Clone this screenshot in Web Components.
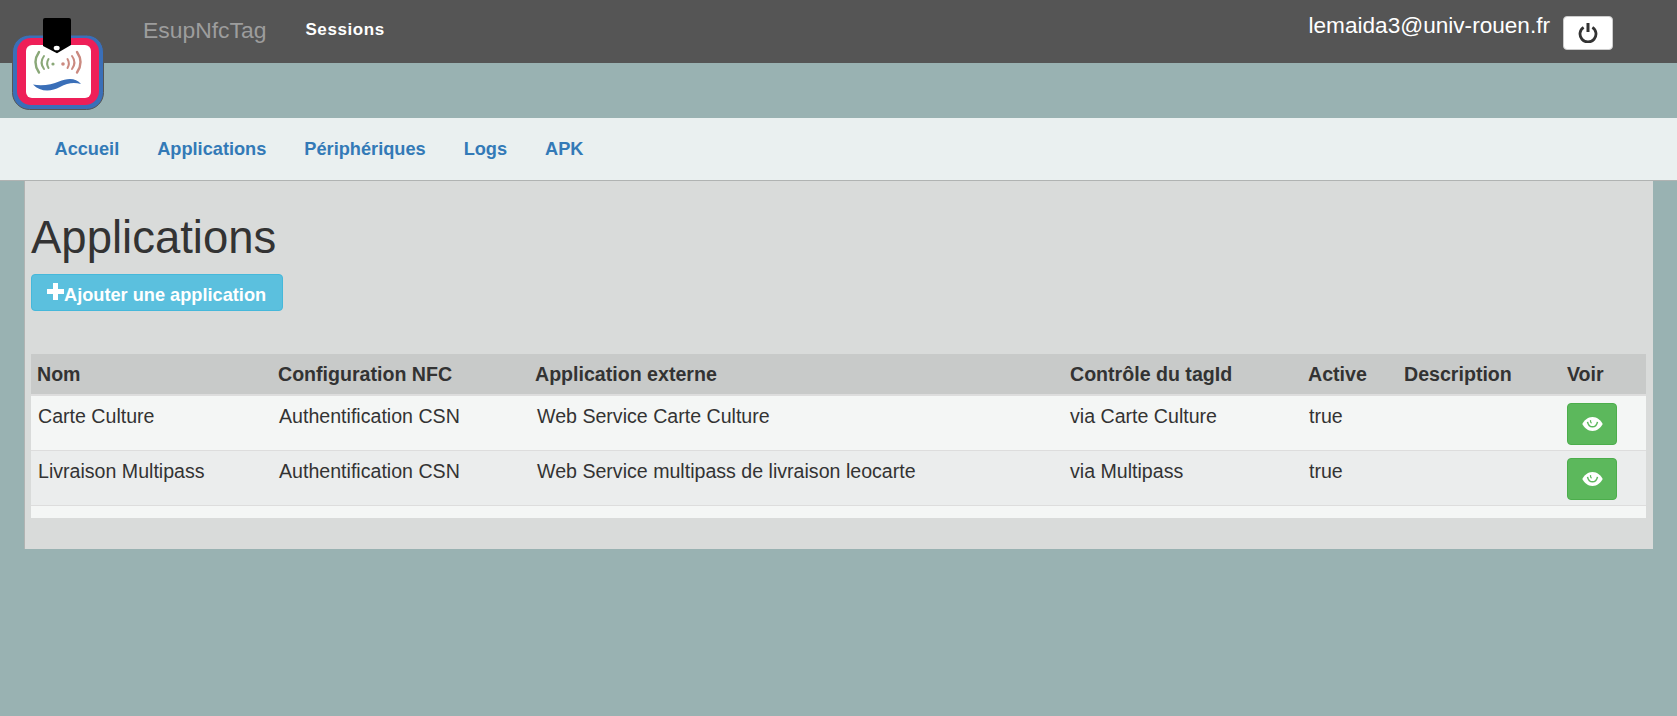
<!DOCTYPE html>
<html lang="fr">
<head>
<meta charset="utf-8">
<title>EsupNfcTag</title>
<style>
    html, body { margin: 0; min-height: 716px; }
    body {
        background: #99b2b2;
        font-family: "Liberation Sans", Arial, sans-serif;
        color: #333;
    }
</style>
</head>
<body>
<app-navbar brand="EsupNfcTag" user="lemaida3@univ-rouen.fr">
    <a href="#">Sessions</a>
</app-navbar>
<app-subnav>
    <a href="#">Accueil</a>
    <a href="#">Applications</a>
    <a href="#">Périphériques</a>
    <a href="#">Logs</a>
    <a href="#">APK</a>
</app-subnav>
<app-panel heading="Applications">
    <add-button>Ajouter une application</add-button>
    <apps-table></apps-table>
</app-panel>

<script>
const ICONS = {
    plus: '<svg width="17" height="17" viewBox="0 0 17 17"><path fill="currentColor" d="M6 0h5v6h6v5h-6v6H6v-6H0V6h6z"/></svg>',
    eye: '<svg width="21" height="14" viewBox="0 0 21 14"><path fill="#fff" d="M10.500 0c4.700 0 8.500 3.400 10.200 7-1.700 3.600-5.500 7-10.200 7S2 10.600.3 7C2 3.400 5.800 0 10.500 0z"/><path fill="none" stroke="#5cb85c" stroke-width="1.500" d="M5.500 4.800c.7 3.300 2.700 5 5 5s4.300-1.700 5-5"/><path fill="none" stroke="#5cb85c" stroke-width="1.300" d="M8.500 3.200c-.2 1.300.2 2.400 1 3"/></svg>',
    power: '<svg width="20" height="20" viewBox="0 0 20 20"><path fill="none" stroke="#333" stroke-width="2.800" d="M5.600 4.300a8 8 0 1 0 8.800 0"/><path fill="none" stroke="#333" stroke-width="3" d="M10 0v9"/></svg>'
};

class AppNavbar extends HTMLElement {
    constructor() {
        super();
        this.attachShadow({ mode: 'open' });
        this.shadowRoot.innerHTML = `
            <style>
                :host {
                    display: flex;
                    align-items: flex-start;
                    height: 63px;
                    background: #555;
                    position: relative;
                    padding: 0 64px 0 143px;
                }
                .brand {
                    font-size: 22.900px;
                    line-height: 60px;
                    color: #9d9d9d;
                    margin-right: 39px;
                }
                .links {
                    font-size: 17px;
                    font-weight: 700;
                    line-height: 60px;
                    letter-spacing: .6px;
                }
                ::slotted(a) { color: #fff; text-decoration: none; }
                .user {
                    margin-left: auto;
                    display: flex;
                    align-items: flex-start;
                    gap: 13px;
                    color: #fff;
                    font-size: 22.600px;
                    line-height: 51px;
                }
                .logout {
                    box-sizing: border-box;
                    width: 50px;
                    height: 34px;
                    margin-top: 16px;
                    background: #fff;
                    border: 1px solid #ccc;
                    border-radius: 4px;
                    display: flex;
                    align-items: center;
                    justify-content: center;
                }
                .logo { position: absolute; left: 12px; top: 18px; }
            </style>
            <div class="brand">${this.getAttribute('brand')}</div>
            <div class="links"><slot></slot></div>
            <div class="user">
                <span>${this.getAttribute('user')}</span>
                <div class="logout">${ICONS.power}</div>
            </div>
            <svg class="logo" width="93" height="94" viewBox="0 0 93 94">
                <rect x=".5" y="17" width="91" height="74.500" rx="17" fill="#3a6fb8" stroke="#555" stroke-width="1"/>
                <rect x="5" y="20" width="82" height="67" rx="14" fill="#ee1f58"/>
                <rect x="14" y="27" width="65" height="53" rx="6" fill="#fff"/>
                <g fill="none" stroke-width="2" stroke-linecap="round">
                    <g stroke="#8aa878">
                        <path d="M27 34c-4.500 6.500-4.500 14 0 20.500" stroke-width="2.400"/>
                        <path d="M32 38c-3 4-3 9 0 13"/>
                        <path d="M36.500 41c-1.800 3-1.800 6 0 9"/>
                    </g>
                    <g stroke="#cb8a80">
                        <path d="M65 34c4.500 6.500 4.500 14 0 20.500" stroke-width="2.400"/>
                        <path d="M60 38c3 4 3 9 0 13"/>
                        <path d="M55.500 41c1.800 3 1.800 6 0 9"/>
                    </g>
                </g>
                <circle cx="41" cy="46" r="1.600" fill="#8aa878"/>
                <circle cx="51" cy="46" r="1.800" fill="#cb8a80"/>
                <path fill="#3a6fb8" d="M21 66.500c8 1.500 19 .5 26-3 8-3.500 17-4 22 2.500-7-2-14-1-21 3-9 5-20 5-27-2.500z"/>
                <path fill="#000" d="M31 2a2 2 0 0 1 2-2h24a2 2 0 0 1 2 2v25L45 35.300 31 28z"/>
                <ellipse cx="44.700" cy="30" rx="3" ry="2.300" fill="#fff"/>
            </svg>
        `;
    }
}

class AppSubnav extends HTMLElement {
    constructor() {
        super();
        this.attachShadow({ mode: 'open' });
        this.shadowRoot.innerHTML = `
            <style>
                :host {
                    display: flex;
                    gap: 38px;
                    box-sizing: border-box;
                    height: 63px;
                    margin-top: 55px;
                    padding: 0 0 0 54.500px;
                    background: #eaf0f0;
                    border-bottom: 1px solid #b0b3b2;
                    font-size: 18.200px;
                    font-weight: 700;
                    line-height: 62px;
                }
                ::slotted(a) { color: #337ab7; text-decoration: none; }
            </style>
            <slot></slot>
        `;
    }
}

class AppPanel extends HTMLElement {
    constructor() {
        super();
        this.attachShadow({ mode: 'open' });
        this.shadowRoot.innerHTML = `
            <style>
                :host {
                    display: block;
                    box-sizing: border-box;
                    width: 1629px;
                    height: 368px;
                    margin-left: 24px;
                    padding: 32px 6px 0 6px;
                    background: #d9dbda;
                    border-left: 1px solid #b0b3b2;
                }
                h1 {
                    margin: 0 0 11px;
                    font-size: 45.500px;
                    font-weight: 400;
                    line-height: 50px;
                    color: #333;
                }
            </style>
            <h1>${this.getAttribute('heading')}</h1>
            <slot></slot>
        `;
    }
}

class AddButton extends HTMLElement {
    constructor() {
        super();
        this.attachShadow({ mode: 'open' });
        this.shadowRoot.innerHTML = `
            <style>
                :host {
                    display: flex;
                    align-items: center;
                    box-sizing: border-box;
                    width: 252px;
                    height: 37px;
                    padding-left: 15px;
                    background: #5bc0de;
                    border: 1px solid #46b8da;
                    border-radius: 4px;
                    color: #fff;
                    font-size: 18.200px;
                    font-weight: 700;
                }
                svg { display: block; margin-top: -2px; }
                .label { padding-top: 6px; }
            </style>
            ${ICONS.plus}<span class="label"><slot></slot></span>
        `;
    }
}

const APPS = [
    ['Carte Culture', 'Authentification CSN', 'Web Service Carte Culture', 'via Carte Culture', 'true', ''],
    ['Livraison Multipass', 'Authentification CSN', 'Web Service multipass de livraison leocarte', 'via Multipass', 'true', '']
];

class AppsTable extends HTMLElement {
    constructor() {
        super();
        this.attachShadow({ mode: 'open' });
        const rows = APPS.map(app => `
            <tr>
                ${app.map(v => `<td>${v}</td>`).join('')}
                <td class="action"><div class="see">${ICONS.eye}</div></td>
            </tr>`).join('');
        this.shadowRoot.innerHTML = `
            <style>
                :host { display: block; width: 1615px; margin-top: 43px; }
                table {
                    width: 1615px;
                    table-layout: fixed;
                    border-collapse: collapse;
                    font-size: 19.600px;
                    color: #333;
                }
                thead { background: #c8cac9; }
                th {
                    height: 40px;
                    padding: 0 0 0 6px;
                    text-align: left;
                    font-weight: 700;
                    border-bottom: 2px solid #ddd;
                }
                td {
                    height: 55px;
                    padding: 7px 0 0 7px;
                    box-sizing: border-box;
                    vertical-align: top;
                    line-height: 27px;
                    border-bottom: 1px solid #ddd;
                }
                td:nth-child(3) { padding-left: 8px; }
                td:nth-child(4) { padding-left: 6px; }
                td.action { padding: 7px 0 0 6px; }
                tbody tr:nth-child(odd) { background: #f4f6f5; }
                tbody tr:nth-child(even) { background: #ebeded; }
                .see {
                    box-sizing: border-box;
                    width: 50px;
                    height: 42px;
                    background: #5cb85c;
                    border: 1px solid #4cae4c;
                    border-radius: 4px;
                    display: flex;
                    align-items: center;
                    justify-content: center;
                }
                .filler { height: 12px; background: #f4f6f5; }
            </style>
            <table>
                <colgroup>
                    <col style="width:241px"><col style="width:257px"><col style="width:535px">
                    <col style="width:238px"><col style="width:96px"><col style="width:163px"><col>
                </colgroup>
                <thead>
                    <tr>
                        <th>Nom</th><th>Configuration NFC</th><th>Application externe</th>
                        <th>Contrôle du tagId</th><th>Active</th><th>Description</th><th>Voir</th>
                    </tr>
                </thead>
                <tbody>${rows}</tbody>
            </table>
            <div class="filler"></div>
        `;
    }
}

customElements.define('app-navbar', AppNavbar);
customElements.define('app-subnav', AppSubnav);
customElements.define('app-panel', AppPanel);
customElements.define('add-button', AddButton);
customElements.define('apps-table', AppsTable);
</script>
</body>
</html>
